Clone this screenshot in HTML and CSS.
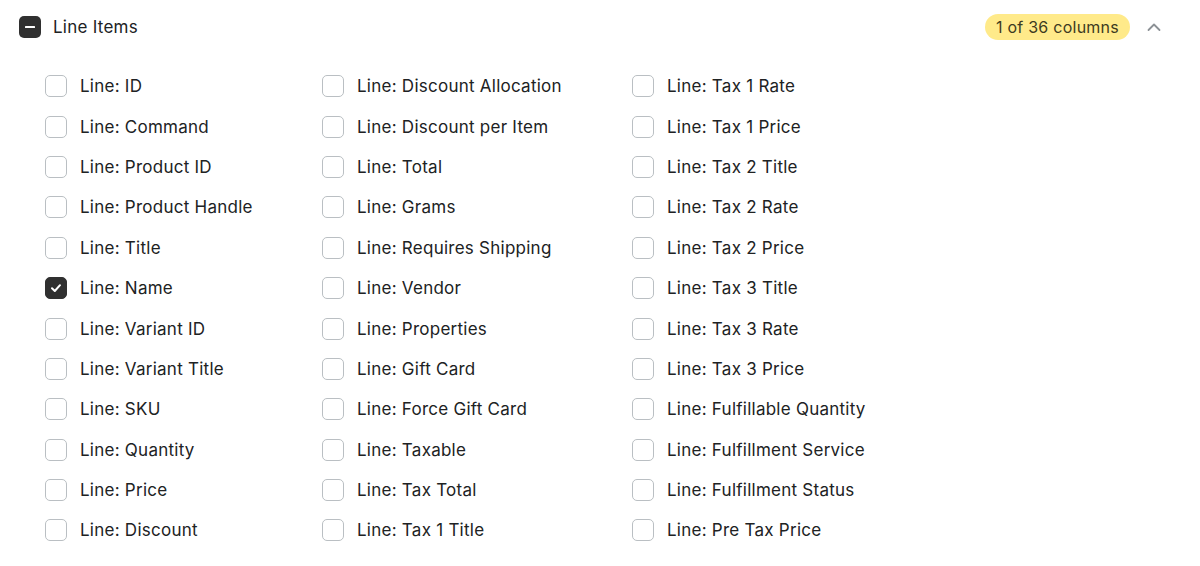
FILE: index.html
```html
<!DOCTYPE html>
<html lang="en">
<head>
    <meta charset="UTF-8">
    <title>Line Items</title>
    <link rel="stylesheet" href="styles.css">
</head>
<body>
<section class="group">
  <!-- Group header -->
  <div class="group_head">
    <span class="group_toggle">
      <svg width="12" height="12" viewBox="0 0 12 12"><rect x="1" y="5" width="10" height="2" rx="0.5" fill="#fff"/></svg>
    </span>
    <span class="group_title">Line Items</span>
    <span class="badge">1 of 36 columns</span>
    <svg class="chevron" width="16" height="14" viewBox="0 0 16 14"><path d="M2.5 10 L8 4.5 L13.5 10" fill="none" stroke="#8c9196" stroke-width="1.8" stroke-linecap="round" stroke-linejoin="round"/></svg>
  </div>

  <!-- Column options -->
  <div class="options">
    <div class="col one">
      <label class="opt"><span class="box"></span>Line: ID</label>
      <label class="opt"><span class="box"></span>Line: Command</label>
      <label class="opt"><span class="box"></span>Line: Product ID</label>
      <label class="opt"><span class="box"></span>Line: Product Handle</label>
      <label class="opt"><span class="box"></span>Line: Title</label>
      <label class="opt"><span class="box checked"><svg width="14" height="14" viewBox="0 0 14 14"><path d="M3 7.3 L5.8 10 L11 4.2" fill="none" stroke="#fff" stroke-width="2" stroke-linecap="round" stroke-linejoin="round"/></svg></span>Line: Name</label>
      <label class="opt"><span class="box"></span>Line: Variant ID</label>
      <label class="opt"><span class="box"></span>Line: Variant Title</label>
      <label class="opt"><span class="box"></span>Line: SKU</label>
      <label class="opt"><span class="box"></span>Line: Quantity</label>
      <label class="opt"><span class="box"></span>Line: Price</label>
      <label class="opt"><span class="box"></span>Line: Discount</label>
    </div>
    <div class="col two">
      <label class="opt"><span class="box"></span>Line: Discount Allocation</label>
      <label class="opt"><span class="box"></span>Line: Discount per Item</label>
      <label class="opt"><span class="box"></span>Line: Total</label>
      <label class="opt"><span class="box"></span>Line: Grams</label>
      <label class="opt"><span class="box"></span>Line: Requires Shipping</label>
      <label class="opt"><span class="box"></span>Line: Vendor</label>
      <label class="opt"><span class="box"></span>Line: Properties</label>
      <label class="opt"><span class="box"></span>Line: Gift Card</label>
      <label class="opt"><span class="box"></span>Line: Force Gift Card</label>
      <label class="opt"><span class="box"></span>Line: Taxable</label>
      <label class="opt"><span class="box"></span>Line: Tax Total</label>
      <label class="opt"><span class="box"></span>Line: Tax 1 Title</label>
    </div>
    <div class="col three">
      <label class="opt"><span class="box"></span>Line: Tax 1 Rate</label>
      <label class="opt"><span class="box"></span>Line: Tax 1 Price</label>
      <label class="opt"><span class="box"></span>Line: Tax 2 Title</label>
      <label class="opt"><span class="box"></span>Line: Tax 2 Rate</label>
      <label class="opt"><span class="box"></span>Line: Tax 2 Price</label>
      <label class="opt"><span class="box"></span>Line: Tax 3 Title</label>
      <label class="opt"><span class="box"></span>Line: Tax 3 Rate</label>
      <label class="opt"><span class="box"></span>Line: Tax 3 Price</label>
      <label class="opt"><span class="box"></span>Line: Fulfillable Quantity</label>
      <label class="opt"><span class="box"></span>Line: Fulfillment Service</label>
      <label class="opt"><span class="box"></span>Line: Fulfillment Status</label>
      <label class="opt"><span class="box"></span>Line: Pre Tax Price</label>
    </div>
  </div>
</section>
</body>
</html>
```

FILE: styles.css
```css
*, *::before, *::after {
    box-sizing: border-box;
}

body {
    margin: 0;
    background: #fff;
    color: #202223;
    font-family: Inter, "Noto Sans", sans-serif;
}

.group {
    padding: 14px 38px 0 19px;
}

/* Header row */
.group_head {
    display: flex;
    align-items: center;
    height: 26px;
}

.group_toggle {
    width: 22px;
    height: 22px;
    border-radius: 5px;
    background: #303030;
    display: flex;
    align-items: center;
    justify-content: center;
}

.group_title {
    margin-left: 12px;
    font-size: 17px;
    letter-spacing: 0.25px;
}

.badge {
    margin-left: auto;
    height: 26px;
    padding: 0 11px;
    border-radius: 13px;
    background: #ffea8a;
    color: #3d3a21;
    font-size: 16px;
    letter-spacing: 0.25px;
    display: flex;
    align-items: center;
}

.chevron {
    margin-left: 16px;
}

/* Options grid */
.options {
    display: flex;
    padding: 26px 0 0 26px;
}

.col {
    display: flex;
    flex-direction: column;
}

.col.one { width: 277px; }
.col.two { width: 310px; }

.opt {
    display: flex;
    align-items: center;
    height: 40.4px;
    font-size: 17px;
    letter-spacing: 0.25px;
}

.box {
    width: 22px;
    height: 22px;
    margin-right: 13px;
    border: 1px solid #babfc3;
    border-radius: 5px;
    display: flex;
    align-items: center;
    justify-content: center;
    flex-shrink: 0;
}

.box.checked {
    background: #303030;
    border-color: #303030;
}
```
